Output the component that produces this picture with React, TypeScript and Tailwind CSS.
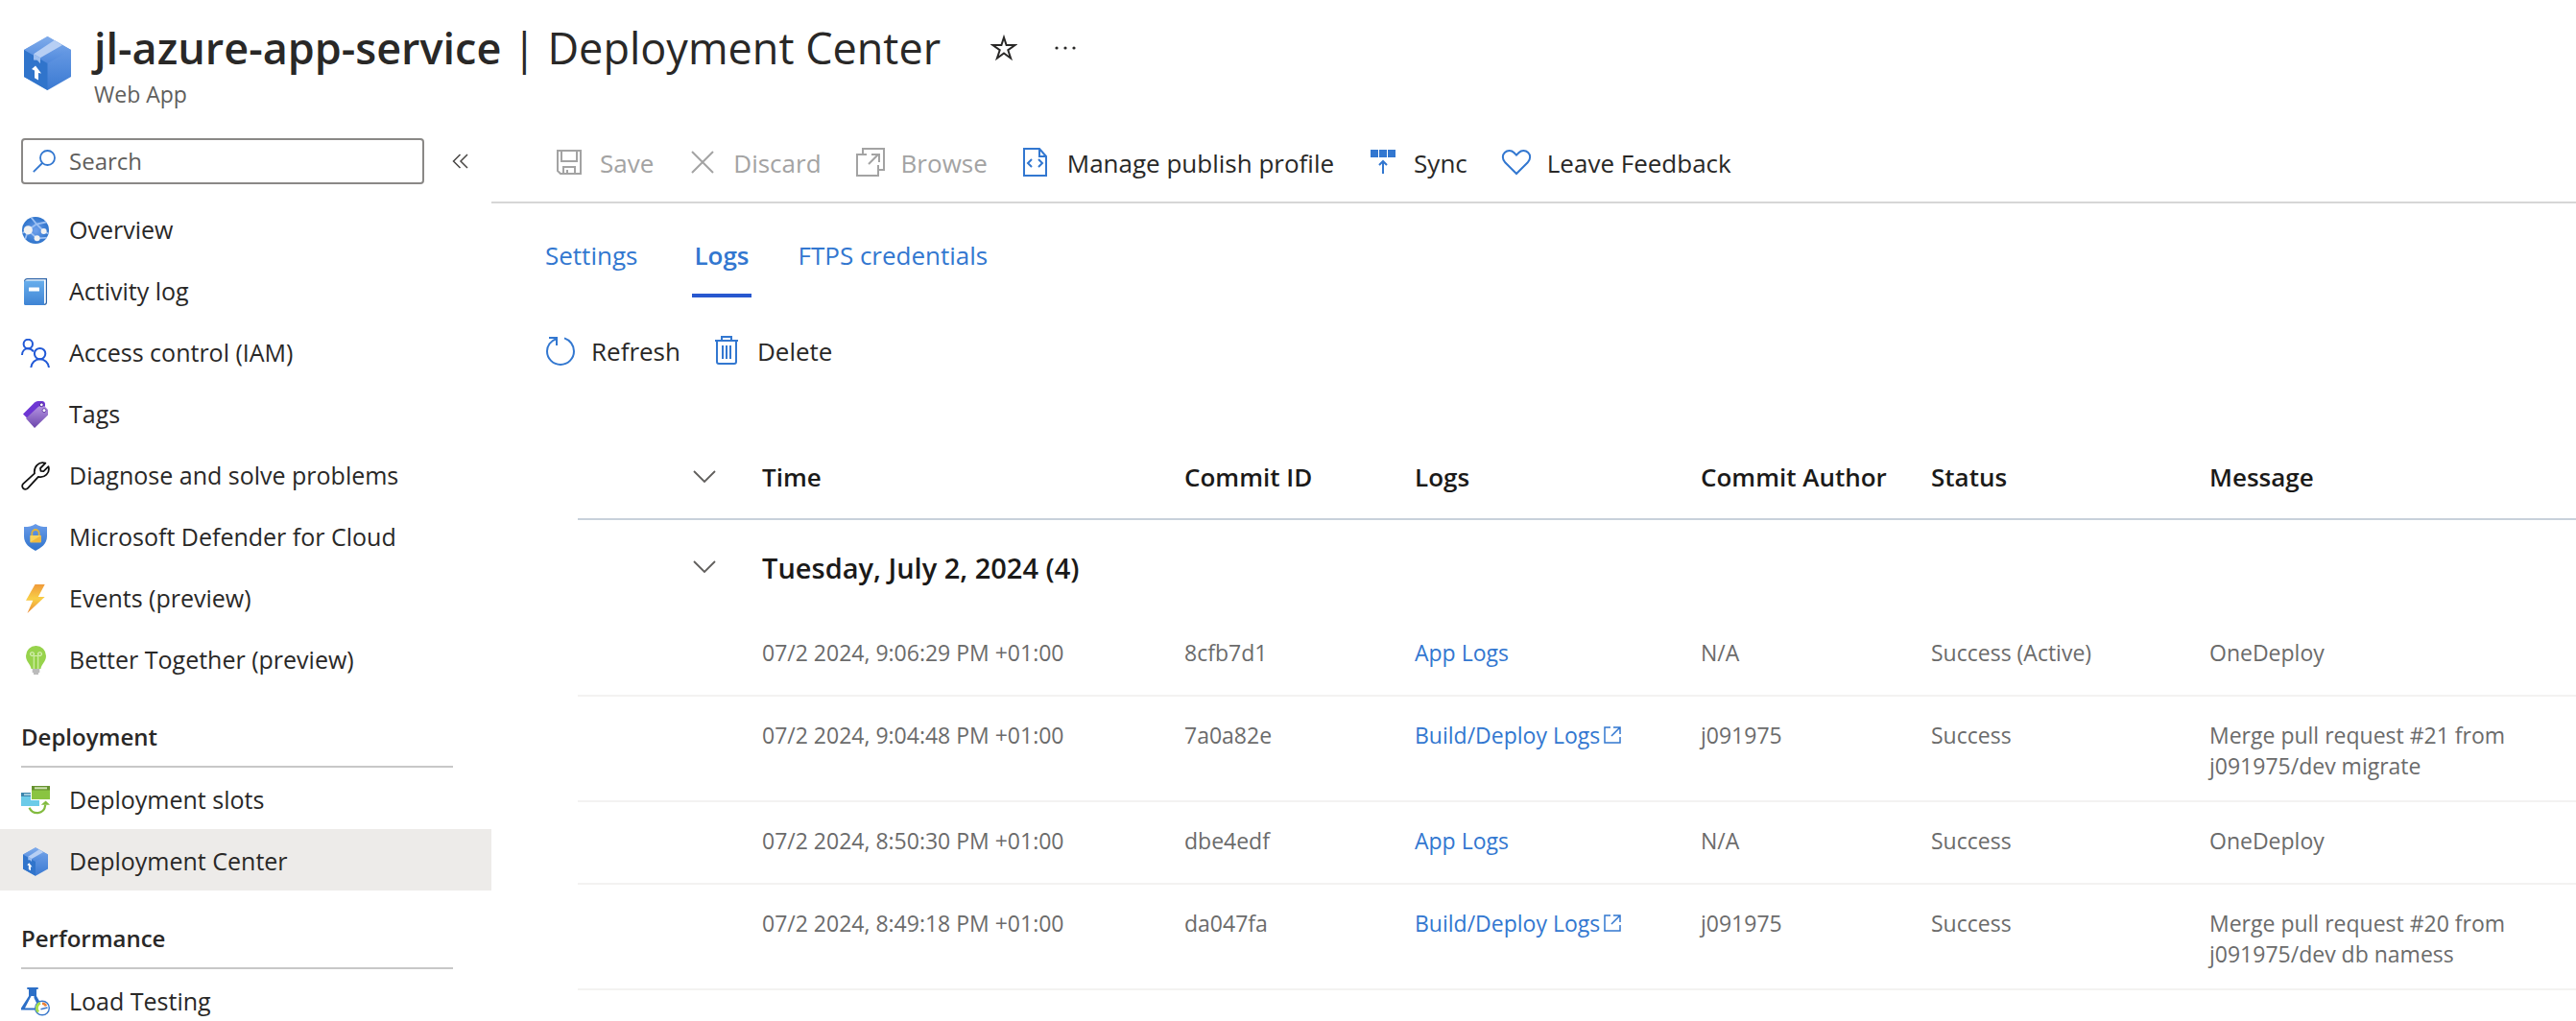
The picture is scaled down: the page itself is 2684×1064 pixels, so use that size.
import type { ReactNode } from "react";

type IconProps = { className?: string };

function BoxIcon({ className, id }: IconProps & { id: string }) {
  return (
    <svg viewBox="0 0 49 56" className={className} aria-hidden="true">
      <defs>
        <linearGradient id={`${id}-right`} x1="0" y1="0" x2="0" y2="1">
          <stop offset="0" stopColor="#74a3e9" />
          <stop offset="1" stopColor="#3b7ad2" />
        </linearGradient>
        <linearGradient id={`${id}-top`} x1="0" y1="0" x2="0" y2="1">
          <stop offset="0" stopColor="#80aceb" />
          <stop offset="1" stopColor="#4e88dc" />
        </linearGradient>
      </defs>
      <path d="M24.5 0 49 14v28L24.5 56 0 42V14z" fill={`url(#${id}-right)`} />
      <path d="M24.5 0 49 14 24.5 28 0 14z" fill={`url(#${id}-top)`} />
      <path d="M0 14 24.500 28v28L0 42z" fill="#3074cb" />
      <path d="m31.500 4 8.500 5-23 13.200-7-4z" fill="#b7cff4" />
      <path d="m10 18.200 7 4v6l-3.200-3.500-3.800-.2z" fill="#9dbff0" />
      <path d="m12 30.500 6 8-3-.6v7.600l-4-2.200v-7.800L8 34z" fill="#fff" />
    </svg>
  );
}

function GlobeIcon() {
  return (
    <svg viewBox="0 0 28 28" className="size-7" aria-hidden="true">
      <defs>
        <radialGradient id="globe">
          <stop offset="0.1" stopColor="#6a9dea" />
          <stop offset="1" stopColor="#2f74cb" />
        </radialGradient>
        <clipPath id="globe-clip"><circle cx="14" cy="14" r="14" /></clipPath>
      </defs>
      <circle cx="14" cy="14" r="14" fill="url(#globe)" />
      <g clipPath="url(#globe-clip)" fill="none" stroke="#9cc0f3" strokeWidth="1.8">
        <path d="M9 0 15 7.500 22.600 15M0 17l6-3L15 7.500 27 5M3 24l3.300-10 9.300 8.300 12-.6M22.600 15l6 3" />
      </g>
      <circle cx="6.300" cy="13.800" r="4.600" fill="#f2f2f2" />
      <circle cx="22.600" cy="15" r="3" fill="#f2f2f2" />
      <circle cx="15.600" cy="22.200" r="3" fill="#f2f2f2" />
    </svg>
  );
}

function BookIcon() {
  return (
    <svg viewBox="0 0 24 28" className="h-7 w-6" aria-hidden="true">
      <defs>
        <linearGradient id="book" x1="0" y1="0" x2="0" y2="1">
          <stop offset="0" stopColor="#68aeec" />
          <stop offset="1" stopColor="#3f84d4" />
        </linearGradient>
      </defs>
      <path d="M.6 3.500Q.6.600 3.600.600h19.800V25Q23.400 27.400 21 27.400H2z" fill="#fff" stroke="#2d64a8" strokeWidth="1.200" />
      <path d="M0 4q0-1.500 1.500-1.500H21V28H1.500Q0 28 0 26.500z" fill="url(#book)" />
      <rect x="5" y="9.500" width="11" height="4" rx=".5" fill="#fff" />
    </svg>
  );
}

function PeopleIcon() {
  return (
    <svg viewBox="0 0 30 30" className="size-[30px]" fill="none" stroke="#2159d6" strokeWidth="2" aria-hidden="true">
      <circle cx="7.300" cy="5.500" r="4.700" />
      <path d="M1 17c0-4 2.600-6.800 6.300-6.800 2.600 0 4.300 1.200 5.600 3.200" />
      <circle cx="19.600" cy="15.600" r="5.700" />
      <path d="M10.300 30c.5-5 4.400-8.700 9.300-8.700s8.800 3.700 9.400 8.700" />
    </svg>
  );
}

function TagsIcon() {
  return (
    <svg viewBox="0 0 26 28" className="h-7 w-[26px]" aria-hidden="true">
      <defs>
        <linearGradient id="tag" x1="0" y1="0" x2="0" y2="1">
          <stop offset="0" stopColor="#b493e2" />
          <stop offset="1" stopColor="#6b45ab" />
        </linearGradient>
      </defs>
      <path d="M0 13.500 12 1.500Q13.500 0 15.500 0h4.700Q22.500 0 23 2.500V8L4 17.500z" fill="#6d35d3" />
      <path d="M3 18 15.500 6.200Q16.500 5.200 18 5.200h4.500L26 9v5.500L12 28z" fill="url(#tag)" />
      <circle cx="19.300" cy="3.800" r="1.900" fill="#fff" stroke="#4f2a9c" />
      <circle cx="22" cy="9.700" r="2" fill="#fff" stroke="#6b45ab" />
    </svg>
  );
}

function WrenchIcon() {
  return (
    <svg viewBox="0 0 30 30" className="size-[30px]" fill="none" stroke="#111" strokeWidth="1.800" strokeLinejoin="round" aria-hidden="true">
      <path d="M2.200 23.200 14 12.400C12.900 5.400 18.500-.5 25.300 1.700L20 7l.5 2.800 2.900.4 5.100-5c1.900 6.800-4 12.200-10.600 10.600L7.100 27.600c-1.400 1.600-3.700 1.600-5 .2-1.300-1.300-1.200-3.400.1-4.600z" />
    </svg>
  );
}

function ShieldIcon() {
  return (
    <svg viewBox="0 0 24 28" className="h-7 w-6" aria-hidden="true">
      <defs>
        <linearGradient id="shield" x1="0" y1="0" x2="0" y2="1">
          <stop offset="0" stopColor="#6a9ce9" />
          <stop offset="1" stopColor="#2f73cc" />
        </linearGradient>
      </defs>
      <path d="M12 0c3.500 2.600 7 3 12 3v10c0 8-6.500 12-12 15C6.500 25 0 21 0 13V3c5 0 8.500-.4 12-3z" fill="url(#shield)" />
      <path d="M8.300 12.500V9.700a3.700 3.700 0 0 1 7.400 0v2.800" fill="none" stroke="#e0b33c" strokeWidth="1.800" />
      <rect x="6.300" y="12" width="11.400" height="7.200" rx=".6" fill="#f8d45c" />
      <path d="M17.700 12v7.200H6.300z" fill="#efb93f" />
    </svg>
  );
}

function BoltIcon() {
  return (
    <svg viewBox="0 0 20 30" className="h-[30px] w-5" aria-hidden="true">
      <defs>
        <linearGradient id="bolt" x1="0" y1="0" x2="0" y2="1">
          <stop offset="0" stopColor="#f09a3a" />
          <stop offset=".5" stopColor="#f8cf47" />
          <stop offset="1" stopColor="#ec8a34" />
        </linearGradient>
      </defs>
      <path d="M9.500 0h10.200L12.800 13h6.900L1.500 30l5.800-13.300H0z" fill="url(#bolt)" />
    </svg>
  );
}

function BulbIcon() {
  return (
    <svg viewBox="0 0 21 30" className="h-[30px] w-[21px]" aria-hidden="true">
      <path d="M10.500 0A10.400 10.400 0 0 0 0 10.400C0 16.500 5 19 5.500 24h10c.5-5 5.500-7.500 5.500-13.600A10.400 10.400 0 0 0 10.500 0z" fill="#97d34c" />
      <path d="M8.300 24V10.500M12.700 24V10.500M8.300 10.500h4.400" fill="none" stroke="#d5efb0" strokeWidth="1.100" />
      <circle cx="6.500" cy="8.600" r="1.900" fill="none" stroke="#e1f4c6" strokeWidth="1.100" />
      <circle cx="14.500" cy="8.600" r="1.900" fill="none" stroke="#e1f4c6" strokeWidth="1.100" />
      <path d="M6.700 25h7.600M6.700 27h7.600M8 29h5" stroke="#a5a5a5" strokeWidth="1.300" />
    </svg>
  );
}

function SlotsIcon() {
  return (
    <svg viewBox="0 0 30 30" className="size-[30px]" aria-hidden="true">
      <rect y="7" width="19" height="14" fill="#6ccbe8" />
      <rect y="7" width="19" height="4" fill="#3d86ad" />
      <rect x="3" y="8.200" width="9" height="1.600" fill="#b9dbe8" />
      <rect x="10" width="20" height="15" fill="#fff" />
      <rect x="11" width="19" height="14" fill="#8ac441" />
      <rect x="11" width="19" height="4.500" fill="#66922f" />
      <rect x="14" y="1.300" width="13" height="2" fill="#cfe3b3" />
      <path d="M8.500 22.700c3.500 7.500 15.500 8 16.800-3" fill="none" stroke="#82bb3f" strokeWidth="2.200" />
      <path d="m20.800 19.800 4.800-4.300 4.400 4.300z" fill="#82bb3f" />
    </svg>
  );
}

function FlaskIcon() {
  return (
    <svg viewBox="0 0 30 30" className="size-[30px]" aria-hidden="true">
      <path d="M6.300 0h11.400v2H16v7l4 7-4 7.500H0v-2L8 9V2H6.300z" fill="#2c6fc7" />
      <path d="M10.500 9h3v2l3 6-1 4.500H4z" fill="#fff" />
      <circle cx="22" cy="21.500" r="7.300" fill="#fff" stroke="#3a78cb" strokeWidth="1.400" />
      <path d="M18 25.500A5.600 5.600 0 0 1 20 16.300" fill="none" stroke="#a6de4a" strokeWidth="2.800" />
      <path d="M22 16.800a4.700 4.700 0 0 1 4 2.500" fill="none" stroke="#e8823a" strokeWidth="2.600" />
      <path d="m20.500 22.800 7-1.800" stroke="#3a78cb" strokeWidth="1.600" />
    </svg>
  );
}

function Line({ children, color = "#3277d0", width = 2 }: { children: ReactNode; color?: string; width?: number }) {
  return (
    <svg viewBox="0 0 32 32" className="size-8 shrink-0" fill="none" stroke={color} strokeWidth={width} aria-hidden="true">
      {children}
    </svg>
  );
}

const muted = "#a3a3a3";

const commands = [
  {
    label: "Save",
    disabled: true,
    icon: <Line color={muted}><path d="M4 3h24v24H7l-3-3zM8 3v11h16V3M10 27v-7h12v7M14 27v-4" /></Line>,
  },
  {
    label: "Discard",
    disabled: true,
    icon: <Line color={muted}><path d="m5 4 22 22M27 4 5 26" /></Line>,
  },
  {
    label: "Browse",
    disabled: true,
    icon: <Line color={muted}><path d="M8 7V1h22v22h-5M12 7H2v22h22V18M14 17 24 7M17 7h8v8" /></Line>,
  },
  {
    label: "Manage publish profile",
    icon: <Line><path d="M3 1h16l7 8v20H3zM19 1v8h7M11 12l-4 4 4 4M18 12l4 4-4 4" /></Line>,
  },
  {
    label: "Sync",
    icon: (
      <Line>
        <path d="M3 2h8v8H3zM12 2h8v8h-8zM21 2h8v8h-8z" fill="#3277d0" stroke="none" />
        <path d="M16 14v13M12 18l4-4 4 4" />
      </Line>
    ),
  },
  {
    label: "Leave Feedback",
    icon: <Line><path d="M16 27 4.200 15.200C1 12 1.200 7.500 3.800 5c2.700-2.600 7-2.600 9.600 0L16 7.600 18.600 5c2.600-2.600 6.900-2.600 9.600 0 2.600 2.500 2.800 7-.4 10.200z" /></Line>,
  },
];

const logCommands = [
  {
    label: "Refresh",
    icon: <Line><path d="M11.500 3.200C5.500 5.200 2 10.500 2 16a14 14 0 0 0 28 0c0-6-4-11.700-10-13.600M4 2h8v8" /></Line>,
  },
  {
    label: "Delete",
    icon: <Line><path d="M4 5h24M11 5V1h10v4M6 5v22q0 2 2 2h16q2 0 2-2V5M12 10v14M16 10v14M20 10v14" /></Line>,
  },
];

const items = [
  { label: "Overview", icon: <GlobeIcon /> },
  { label: "Activity log", icon: <BookIcon /> },
  { label: "Access control (IAM)", icon: <PeopleIcon /> },
  { label: "Tags", icon: <TagsIcon /> },
  { label: "Diagnose and solve problems", icon: <WrenchIcon /> },
  { label: "Microsoft Defender for Cloud", icon: <ShieldIcon /> },
  { label: "Events (preview)", icon: <BoltIcon /> },
  { label: "Better Together (preview)", icon: <BulbIcon /> },
];

const deployment = [
  { label: "Deployment slots", icon: <SlotsIcon /> },
  { label: "Deployment Center", icon: <BoxIcon id="nav-box" className="h-[30px] w-[26px]" />, active: true },
];

const performance = [{ label: "Load Testing", icon: <FlaskIcon /> }];

const rows = [
  { time: "07/2 2024, 9:06:29 PM +01:00", id: "8cfb7d1", log: "App Logs", author: "N/A", status: "Success (Active)", message: "OneDeploy" },
  { time: "07/2 2024, 9:04:48 PM +01:00", id: "7a0a82e", log: "Build/Deploy Logs", external: true, author: "j091975", status: "Success", message: "Merge pull request #21 from j091975/dev migrate" },
  { time: "07/2 2024, 8:50:30 PM +01:00", id: "dbe4edf", log: "App Logs", author: "N/A", status: "Success", message: "OneDeploy" },
  { time: "07/2 2024, 8:49:18 PM +01:00", id: "da047fa", log: "Build/Deploy Logs", external: true, author: "j091975", status: "Success", message: "Merge pull request #20 from j091975/dev db namess" },
];

function NavList({ entries }: { entries: { label: string; icon: ReactNode; active?: boolean }[] }) {
  return (
    <ul>
      {entries.map((e) => (
        <li key={e.label}>
          <a
            href="#"
            aria-current={e.active ? "page" : undefined}
            className={e.active ? "flex h-16 items-center gap-5 bg-[#edebe9] pt-1 pl-[22px]" : "flex h-16 items-center gap-5 pt-1 pl-[22px]"}
          >
            <span className="flex w-[30px] shrink-0 justify-center">{e.icon}</span>
            {e.label}
          </a>
        </li>
      ))}
    </ul>
  );
}

function NavHeading({ children }: { children: ReactNode }) {
  return (
    <h2 className="mr-10 ml-[22px] border-b-2 border-[#c8c8c8] pt-[34px] pb-3.5 text-[24px] leading-8 font-semibold">
      {children}
    </h2>
  );
}

function ChevronButton({ label }: { label: string }) {
  return (
    <button type="button" aria-label={label} className="block">
      <svg viewBox="0 0 24 14" className="h-3.5 w-6" fill="none" stroke="#605e5c" strokeWidth="1.800" aria-hidden="true">
        <path d="m1 1 11 11L23 1" />
      </svg>
    </button>
  );
}

export default function App() {
  return (
    <div className="flex h-screen flex-col overflow-hidden bg-white font-['Open_Sans','Noto_Sans',sans-serif] text-[#292827]">
      <header className="flex items-start pt-[18px] pb-4 pl-[25px]">
        <BoxIcon id="header-box" className="mt-5 h-14 w-[49px] shrink-0" />
        <div className="ml-6">
          <div className="flex items-center">
            <h1 className="text-[45px] leading-16 whitespace-nowrap">
              <span className="font-semibold">jl-azure-app-service</span> | Deployment Center
            </h1>
            <button type="button" aria-label="Add to favorites" className="ml-[52px]">
              <svg viewBox="0 0 28 28" className="size-7" fill="none" stroke="#292827" strokeWidth="2" aria-hidden="true">
                <path d="m14 3 2.600 8h8.900l-7.200 5.200 2.800 8.500-7.100-5.200-7.100 5.200 2.800-8.500L2.500 11h8.900z" />
              </svg>
            </button>
            <button type="button" aria-label="More actions" className="ml-9">
              <svg viewBox="0 0 28 8" className="h-2 w-7" fill="#292827" aria-hidden="true">
                <circle cx="5" cy="4" r="1.600" />
                <circle cx="14" cy="4" r="1.600" />
                <circle cx="23" cy="4" r="1.600" />
              </svg>
            </button>
          </div>
          <p className="text-[23px] leading-8 text-[#605e5c]">Web App</p>
        </div>
      </header>

      <div className="flex min-h-0 flex-1">
        <nav className="w-[512px] shrink-0 overflow-hidden text-[25px]">
          <div className="flex items-center py-3.5 pl-[22px]">
            <label className="flex h-12 w-[420px] items-center gap-3.5 rounded border-2 border-[#8a8886] pl-2.5">
              <svg viewBox="0 0 24 24" className="size-6 shrink-0" fill="none" stroke="#3277d0" strokeWidth="1.800" aria-hidden="true">
                <circle cx="15.500" cy="8.500" r="7.500" />
                <path d="M10 14 .8 23.200" />
              </svg>
              <input
                type="text"
                aria-label="Search"
                placeholder="Search"
                className="min-w-0 flex-1 bg-transparent text-[24px] outline-none placeholder:text-[#605e5c]"
              />
            </label>
            <button type="button" aria-label="Collapse menu" className="ml-7">
              <svg viewBox="0 0 20 16" className="h-4 w-5" fill="none" stroke="#484644" strokeWidth="1.500" aria-hidden="true">
                <path d="M9.500 1 2.500 8l7 7M17 1l-7 7 7 7" />
              </svg>
            </button>
          </div>
          <NavList entries={items} />
          <NavHeading>Deployment</NavHeading>
          <NavList entries={deployment} />
          <NavHeading>Performance</NavHeading>
          <NavList entries={performance} />
        </nav>

        <main className="min-w-0 flex-1 overflow-hidden">
          <div className="flex h-[82px] items-center gap-[35px] border-b-2 border-[#d6d6d6] pl-[65px] text-[26px] leading-8">
            {commands.map((c) => (
              <button
                key={c.label}
                type="button"
                disabled={c.disabled}
                className="flex items-center gap-4 whitespace-nowrap disabled:text-[#a3a3a3]"
              >
                {c.icon}
                {c.label}
              </button>
            ))}
          </div>

          <div role="tablist" className="flex gap-[49px] pt-[38px] pl-14 text-[26px] leading-8 text-[#3277d0]">
            <button type="button" role="tab" aria-selected="false" className="border-b-4 border-transparent pr-2 pb-6">Settings</button>
            <button type="button" role="tab" aria-selected="true" className="border-b-4 border-[#2858cf] px-0.5 pb-6 font-semibold">Logs</button>
            <button type="button" role="tab" aria-selected="false" className="border-b-4 border-transparent pr-2 pb-6">FTPS credentials</button>
          </div>

          <div className="flex gap-8 pt-10 pl-14 text-[26px] leading-8">
            {logCommands.map((c) => (
              <button key={c.label} type="button" className="flex items-center gap-4">
                {c.icon}
                {c.label}
              </button>
            ))}
          </div>

          <div className="mt-[66px] pl-[90px]">
            <table className="w-full table-fixed border-separate border-spacing-0 text-left text-[23px] leading-8 text-[#6b6b6b]">
              <colgroup>
                <col className="w-[192px]" />
                <col className="w-[440px]" />
                <col className="w-[240px]" />
                <col className="w-[298px]" />
                <col className="w-[240px]" />
                <col className="w-[290px]" />
                <col />
              </colgroup>
              <thead>
                <tr className="text-[26px] text-[#1b1a19] [&>th]:border-b-2 [&>th]:border-[#c8d1db] [&>th]:pt-[33px] [&>th]:pb-[27px] [&>th]:font-semibold">
                  <th><div className="flex h-8 items-center pl-[120px]"><ChevronButton label="Collapse all groups" /></div></th>
                  <th scope="col">Time</th>
                  <th scope="col">Commit ID</th>
                  <th scope="col">Logs</th>
                  <th scope="col">Commit Author</th>
                  <th scope="col">Status</th>
                  <th scope="col">Message</th>
                </tr>
              </thead>
              <tbody>
                <tr className="text-[#1b1a19]">
                  <td><div className="flex h-[98px] items-center pl-[120px]"><ChevronButton label="Collapse group" /></div></td>
                  <th scope="rowgroup" colSpan={6} className="pt-0.5 text-[29px] leading-10 font-semibold">Tuesday, July 2, 2024 (4)</th>
                </tr>
                {rows.map((r) => (
                  <tr key={r.id} className="h-[86px] align-top [&>td]:border-b-2 [&>td]:border-[#f3f2f1] [&>td]:pt-6 [&>td]:pb-5">
                    <td />
                    <td>{r.time}</td>
                    <td>{r.id}</td>
                    <td>
                      <a href="#" className="inline-flex items-center gap-1 whitespace-nowrap text-[#3277d0]">
                        {r.log}
                        {r.external && (
                          <svg viewBox="0 0 18 18" className="size-[18px]" fill="none" stroke="currentColor" strokeWidth="1.500" aria-hidden="true">
                            <path d="M7 1H1v16h16v-6M10 1h7v7M17 1 8 10" />
                          </svg>
                        )}
                      </a>
                    </td>
                    <td>{r.author}</td>
                    <td>{r.status}</td>
                    <td>{r.message}</td>
                  </tr>
                ))}
              </tbody>
            </table>
          </div>
        </main>
      </div>
    </div>
  );
}
